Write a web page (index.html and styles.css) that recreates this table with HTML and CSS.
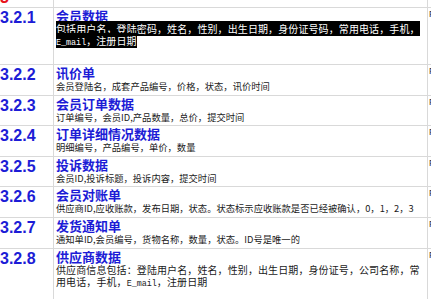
FILE: index.html
```html
<!DOCTYPE html>
<html lang="zh-CN">
<head>
<meta charset="utf-8">
<title>3.2 数据</title>
<link rel="stylesheet" href="styles.css">
</head>
<body>
<div class="doc">
  <div class="row row-top">
    <div class="num"><div class="red-tail">3</div></div>
    <div class="body"></div>
    <div class="side"></div>
  </div>
  <div class="row h57">
    <div class="num">3.2.1</div>
    <div class="body">
      <div class="title">会员数据</div>
      <div class="desc wide"><span class="hl">包括用户名，登陆密码，姓名，性别，出生日期，身份证号码，常用电话，手机，<br><span class="mono">E_mail</span>，注册日期</span></div>
    </div>
    <div class="side">F</div>
  </div>
  <div class="row h31">
    <div class="num">3.2.2</div>
    <div class="body">
      <div class="title">讯价单</div>
      <div class="desc">会员登陆名，成套产品编号，价格，状态，讯价时间</div>
    </div>
    <div class="side">F</div>
  </div>
  <div class="row h30">
    <div class="num">3.2.3</div>
    <div class="body">
      <div class="title">会员订单数据</div>
      <div class="desc">订单编号，会员ID,产品数量，总价，提交时间</div>
    </div>
    <div class="side">F</div>
  </div>
  <div class="row h31">
    <div class="num">3.2.4</div>
    <div class="body">
      <div class="title">订单详细情况数据</div>
      <div class="desc">明细编号，产品编号，单价，数量</div>
    </div>
    <div class="side">F</div>
  </div>
  <div class="row h30">
    <div class="num">3.2.5</div>
    <div class="body">
      <div class="title">投诉数据</div>
      <div class="desc">会员ID,投诉标题，投诉内容，提交时间</div>
    </div>
    <div class="side">F</div>
  </div>
  <div class="row h31">
    <div class="num">3.2.6</div>
    <div class="body">
      <div class="title">会员对账单</div>
      <div class="desc">供应商ID,应收账款，发布日期，状态。状态标示应收账款是否已经被确认，0，1，2，3</div>
    </div>
    <div class="side">F</div>
  </div>
  <div class="row h31">
    <div class="num">3.2.7</div>
    <div class="body">
      <div class="title">发货通知单</div>
      <div class="desc">通知单ID,会员编号，货物名称，数量，状态。ID号是唯一的</div>
    </div>
    <div class="side">F</div>
  </div>
  <div class="row h60">
    <div class="num">3.2.8</div>
    <div class="body">
      <div class="title">供应商数据</div>
      <div class="desc wide">供应商信息包括：登陆用户名，姓名，性别，出生日期，身份证号，公司名称，常<br>用电话，手机，<span class="mono">E_mail</span>，注册日期</div>
    </div>
    <div class="side">F</div>
  </div>
</div>
</body>
</html>
```

FILE: styles.css
```css
html, body {
  margin: 0;
  padding: 0;
  background: #ffffff;
  overflow: hidden;
}

.doc {
  width: 431px;
  height: 299px;
  overflow: hidden;
}

.row {
  display: grid;
  grid-template-columns: 54px 374px 1fr;
  box-sizing: border-box;
  border-top: 1px solid #d9d9d9;
}

.row-top {
  height: 7px;
  border-top: none;
  overflow: hidden;
}

.h57 { height: 57px; }
.h31 { height: 31px; }
.h30 { height: 30px; }
.h60 { height: 60px; }

.num {
  box-sizing: border-box;
  border-right: 1px solid #d9d9d9;
  padding-top: 1px;
  font-family: "Liberation Sans", Arial, sans-serif;
  font-weight: bold;
  font-size: 16px;
  line-height: 18px;
  color: #1c1cd6;
  white-space: nowrap;
  overflow: hidden;
}

.red-tail {
  color: #e8141e;
  margin-top: -12px;
}

.body {
  box-sizing: border-box;
  border-right: 1px solid #d9d9d9;
  padding-left: 2px;
  overflow: hidden;
}

.title {
  font-family: "Noto Sans CJK SC", "Liberation Sans", sans-serif;
  font-weight: bold;
  font-size: 13px;
  line-height: 15px;
  color: #1c1cd6;
  white-space: nowrap;
}

.desc {
  font-family: "Noto Sans CJK SC", "Liberation Sans", sans-serif;
  font-size: 9.3px;
  line-height: 12px;
  color: #1a1a1a;
  white-space: nowrap;
}

.desc.wide {
  font-size: 10px;
  letter-spacing: 0.1px;
  line-height: 12px;
}

.hl {
  background: #000000;
  color: #ffffff;
}

.mono {
  font-family: "Liberation Mono", "DejaVu Sans Mono", monospace;
  font-size: 8.4px;
  letter-spacing: 0;
}

.side {
  padding-left: 1px;
  padding-top: 1px;
  font-family: "Liberation Sans", Arial, sans-serif;
  font-size: 9px;
  line-height: 10px;
  color: #333333;
  overflow: hidden;
}
```
